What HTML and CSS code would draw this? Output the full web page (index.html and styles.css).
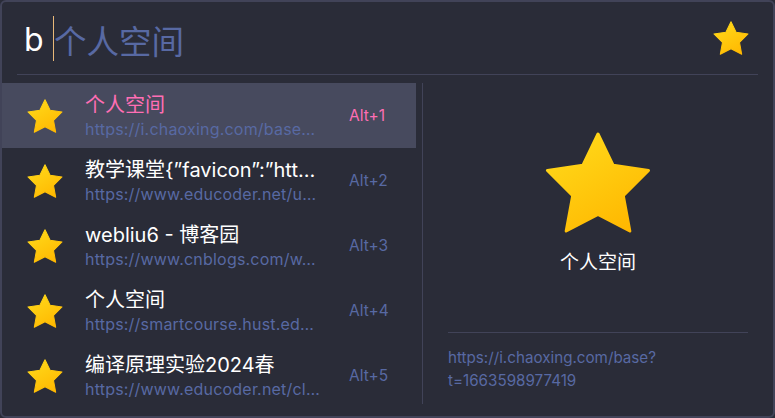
FILE: index.html
```html
<!DOCTYPE html>
<html>
<head>
	<meta charset="utf-8">
	<title>搜索</title>
	<link rel="stylesheet" href="styles.css">
</head>
<body>
	<svg class="defs" width="0" height="0">
		<defs>
			<linearGradient id="star-fill" x1="0.2" y1="0" x2="0.8" y2="1">
				<stop offset="0" stop-color="#ffd91a"/>
				<stop offset="1" stop-color="#ffb700"/>
			</linearGradient>
			<symbol id="star" viewBox="0 0 104 100">
				<path fill="url(#star-fill)" stroke="url(#star-fill)" stroke-width="3" stroke-linejoin="round" d="M52 2 L67 33 L102 38 L77 63 L83.5 98 L52 81.5 L20.5 98 L27 63 L2 38 L37 33 Z"/>
			</symbol>
		</defs>
	</svg>

	<div class="window">
		<div class="search-bar">
			<span class="typed">b</span>
			<span class="caret"></span>
			<span class="hint">个人空间</span>
			<svg class="star-top"><use href="#star"/></svg>
		</div>

		<div class="main">
			<ul class="results">
				<li class="row active">
					<svg class="star-row"><use href="#star"/></svg>
					<div class="info">
						<div class="title">个人空间</div>
						<div class="url">https://i.chaoxing.com/base…</div>
					</div>
					<span class="key">Alt+1</span>
				</li>
				<li class="row">
					<svg class="star-row"><use href="#star"/></svg>
					<div class="info">
						<div class="title">教学课堂{”favicon”:”htt…</div>
						<div class="url">https://www.educoder.net/u…</div>
					</div>
					<span class="key">Alt+2</span>
				</li>
				<li class="row">
					<svg class="star-row"><use href="#star"/></svg>
					<div class="info">
						<div class="title">webliu6 - 博客园</div>
						<div class="url">https://www.cnblogs.com/w…</div>
					</div>
					<span class="key">Alt+3</span>
				</li>
				<li class="row">
					<svg class="star-row"><use href="#star"/></svg>
					<div class="info">
						<div class="title">个人空间</div>
						<div class="url">https://smartcourse.hust.ed…</div>
					</div>
					<span class="key">Alt+4</span>
				</li>
				<li class="row">
					<svg class="star-row"><use href="#star"/></svg>
					<div class="info">
						<div class="title">编译原理实验2024春</div>
						<div class="url">https://www.educoder.net/cl…</div>
					</div>
					<span class="key">Alt+5</span>
				</li>
			</ul>

			<div class="preview">
				<div class="preview-top">
					<svg class="star-big"><use href="#star"/></svg>
					<div class="preview-name">个人空间</div>
				</div>
				<div class="preview-url">https://i.chaoxing.com/base?t=1663598977419</div>
			</div>
		</div>
	</div>
</body>
</html>
```

FILE: styles.css
```css
html, body {
	height: 100%;
	margin: 0;
	padding: 0;
	background: #2a2c38;
	overflow: hidden;
}
body {
	font-family: "Inter", "Noto Sans CJK SC", sans-serif;
}
.defs {
	display: block;
	height: 0;
}
.window {
	box-sizing: border-box;
	width: 775px;
	height: 418px;
	border: 2px solid #414358;
	border-radius: 6px;
	background: #2a2c38;
	display: flex;
	flex-direction: column;
}
.search-bar {
	height: 72px;
	margin: 0 15px;
	padding-left: 7px;
	border-bottom: 1px solid #414358;
	display: flex;
	align-items: center;
	flex-shrink: 0;
}
.typed {
	font-size: 32px;
	color: #fff;
	width: 29px;
	padding-top: 3px;
}
.caret {
	width: 1px;
	height: 45px;
	background: #e8b878;
}
.hint {
	font-family: "Noto Sans CJK SC", sans-serif;
	font-size: 32.5px;
	color: #5869a3;
	flex: 1;
	padding-top: 2px;
}
.star-top {
	width: 36px;
	height: 34px;
	margin-right: 9px;
}
.main {
	display: flex;
	margin-top: 8px;
	flex: 1;
}
.results {
	list-style: none;
	margin: 0;
	padding: 0;
	width: 414px;
	flex-shrink: 0;
}
.row {
	height: 65px;
	display: flex;
	align-items: center;
	padding-left: 25px;
	box-sizing: border-box;
}
.row.active {
	background: #474a5e;
}
.star-row {
	width: 36px;
	height: 34px;
	flex-shrink: 0;
}
.info {
	width: 232px;
	margin-left: 22px;
}
.title {
	font-size: 20px;
	line-height: 26px;
	color: #fff;
	white-space: nowrap;
}
.url {
	font-size: 16px;
	line-height: 22px;
	letter-spacing: 0.2px;
	color: #5869a3;
	white-space: nowrap;
}
.key {
	font-size: 15.5px;
	color: #5869a3;
	margin-left: 32px;
}
.active .title,
.active .key {
	color: #ff6eb4;
}
.preview {
	margin: 0 0 4px 6px;
	border-left: 1px solid #414358;
	flex: 1;
	display: flex;
	flex-direction: column;
	height: 321px;
}
.preview-top {
	height: 249px;
	display: flex;
	flex-direction: column;
	align-items: center;
	padding-top: 49px;
	box-sizing: border-box;
}
.star-big {
	width: 106px;
	height: 101px;
}
.preview-name {
	font-family: "Noto Sans CJK SC", sans-serif;
	font-size: 19px;
	line-height: 26px;
	color: #fff;
	margin-top: 15px;
}
.preview-url {
	margin: 0 25px;
	padding-top: 13px;
	border-top: 1px solid #414358;
	font-size: 15.2px;
	line-height: 23px;
	color: #5869a3;
	word-break: break-word;
}
```
